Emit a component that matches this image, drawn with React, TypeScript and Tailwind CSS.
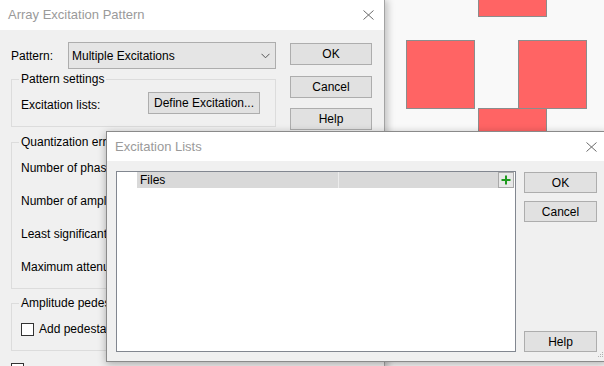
import React from "react";

function CloseX() {
  return (
    <svg width="11" height="10" viewBox="0 0 11 10" className="shrink-0">
      <path d="M0.5 0.5 L10.5 9.5 M10.5 0.5 L0.5 9.5" stroke="#6b6b6b" strokeWidth="1" fill="none" />
    </svg>
  );
}

function Btn({ label, className = "" }: { label: string; className?: string }) {
  return (
    <div
      className={`flex items-center justify-center border border-[#adadad] bg-[#e1e1e1] text-[12px] text-black ${className}`}
    >
      {label}
    </div>
  );
}

function CheckBox() {
  return <div className="h-[13px] w-[13px] shrink-0 border border-[#333] bg-white" />;
}

function Group({ title, className, children }: { title: string; className: string; children?: React.ReactNode }) {
  return (
    <fieldset className={`border border-[#dcdcdc] pl-[7px] ${className}`}>
      <legend className="px-[2px] text-[12px] leading-[16px]">{title}</legend>
      <div className="pl-[2px]">{children}</div>
    </fieldset>
  );
}

function Square({ className }: { className: string }) {
  return <div className={`absolute h-[69px] w-[69px] border border-[#8c8c8c] bg-[#ff6464] ${className}`} />;
}

export default function App() {
  return (
    <div className="relative h-[366px] w-[604px] overflow-hidden bg-[#f9f9f9] font-['Liberation_Sans',Arial,sans-serif] text-[12px] text-black">
      {/* canvas behind the dialogs */}
      <div className="absolute left-[478px] top-[-53px] h-[70px] w-[69px] border border-[#8c8c8c] bg-[#ff6464]" />
      <Square className="left-[406px] top-[40px]" />
      <Square className="left-[518px] top-[40px]" />
      <Square className="left-[478px] top-[108px]" />

      {/* Array Excitation Pattern window */}
      <div className="absolute left-0 top-0 h-[390px] w-[385px] border-r border-[#a3a3a3] bg-[#f0f0f0] shadow-[3px_0_7px_rgba(0,0,0,0.22)]">
        <div className="flex h-[30px] items-center justify-between bg-white pl-[8px] pr-[10px]">
          <span className="text-[13px] text-[#9a9a9a]">Array Excitation Pattern</span>
          <CloseX />
        </div>
        <div className="flex gap-[14px] pl-[11px] pt-[12px]">
          <div className="w-[265px]">
            <div className="flex h-[27px] items-center">
              <span className="w-[57px]">Pattern:</span>
              <div className="flex h-[27px] w-[208px] items-center justify-between border border-[#adadad] bg-[#e5e5e5] pl-[3px] pr-[5px]">
                <span>Multiple Excitations</span>
                <svg width="9" height="6" viewBox="0 0 9 6">
                  <path d="M0.5 0.8 L4.5 4.8 L8.5 0.8" stroke="#555" strokeWidth="1" fill="none" />
                </svg>
              </div>
            </div>
            <Group title="Pattern settings" className="mt-[2px] h-[56px]">
              <div className="mt-[5px] flex items-center">
                <span className="mt-[3px] w-[127px]">Excitation lists:</span>
                <Btn label="Define Excitation..." className="h-[22px] w-[112px]" />
              </div>
            </Group>
            <Group title="Quantization error" className="mt-[7px] h-[155px]">
              <div className="mt-[1px] flex flex-col">
                <div className="flex h-[33px] items-center">Number of phase bits:</div>
                <div className="flex h-[33px] items-center">Number of amplitude bits:</div>
                <div className="flex h-[33px] items-center">Least significant bit:</div>
                <div className="flex h-[33px] items-center">Maximum attenuation:</div>
              </div>
            </Group>
            <Group title="Amplitude pedestal" className="mt-[6px] h-[56px]">
              <div className="mt-[8px] flex h-[20px] items-center gap-[5px]">
                <CheckBox />
                <span>Add pedestal</span>
              </div>
            </Group>
            <div className="mt-[12px]">
              <CheckBox />
            </div>
          </div>
          <div className="flex flex-col pt-[1px]">
            <Btn label="OK" className="h-[22px] w-[82px]" />
            <Btn label="Cancel" className="mt-[11px] h-[22px] w-[82px]" />
            <Btn label="Help" className="mt-[10px] h-[22px] w-[82px]" />
          </div>
        </div>
      </div>

      {/* Excitation Lists window */}
      <div className="absolute left-[106px] top-[131px] flex h-[231px] w-[501px] flex-col border border-[#8a8a8a] bg-[#f0f0f0] shadow-[0_2px_8px_rgba(0,0,0,0.3)]">
        <div className="flex h-[29px] shrink-0 items-center justify-between bg-white pl-[8px] pr-[9px]">
          <span className="text-[13px] text-[#9a9a9a]">Excitation Lists</span>
          <CloseX />
        </div>
        <div className="flex flex-1 gap-[8px] pl-[9px] pt-[10px]">
          <div className="h-[181px] w-[400px] border border-[#828790] bg-white">
            <div className="flex h-[16px] items-stretch pl-[20px]">
              <div className="flex w-[202px] items-center border-r border-[#ececec] bg-[#d9d9d9] pl-[3px]">Files</div>
              <div className="w-[159px] bg-[#d9d9d9]" />
              <div className="flex w-[16px] items-center justify-center border border-[#a9a9a9] bg-[#e8e8e8]">
                <svg width="10" height="10" viewBox="0 0 10 10">
                  <path d="M5 0.5 V9.5 M0.5 5 H9.5" stroke="#1f9a1f" strokeWidth="2" fill="none" />
                </svg>
              </div>
            </div>
          </div>
          <div className="flex h-[181px] flex-col pt-[1px]">
            <Btn label="OK" className="h-[21px] w-[73px]" />
            <Btn label="Cancel" className="mt-[8px] h-[21px] w-[73px]" />
            <Btn label="Help" className="mt-auto h-[21px] w-[73px]" />
          </div>
        </div>
        <svg width="7" height="7" viewBox="0 0 7 7" className="absolute bottom-[3px] right-[2px]">
          <rect x="5" y="1" width="1" height="1" fill="#b0b0b0" />
          <rect x="3" y="3" width="1" height="1" fill="#b0b0b0" />
          <rect x="5" y="3" width="1" height="1" fill="#b0b0b0" />
          <rect x="1" y="5" width="1" height="1" fill="#b0b0b0" />
          <rect x="3" y="5" width="1" height="1" fill="#b0b0b0" />
          <rect x="5" y="5" width="1" height="1" fill="#b0b0b0" />
        </svg>
      </div>
    </div>
  );
}
